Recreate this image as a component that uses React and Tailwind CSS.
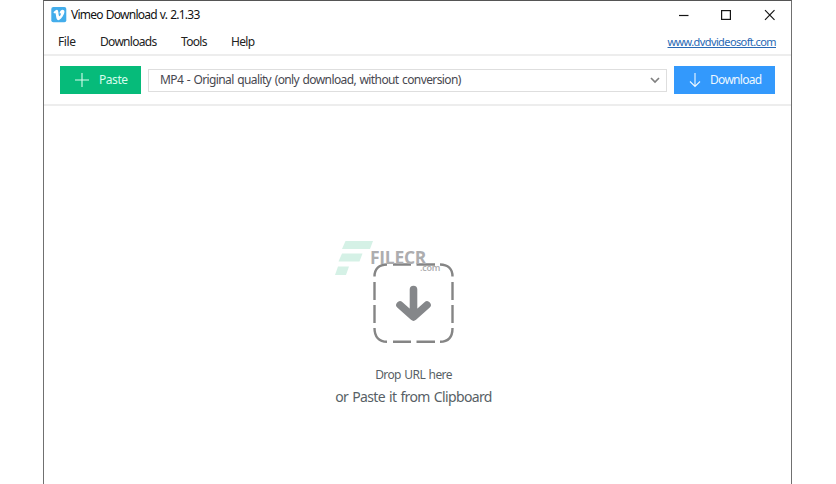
import React from "react";

function VimeoIcon() {
  return (
    <svg className="h-4 w-4 shrink-0" viewBox="0 0 16 16">
      <rect x="0.3" y="0.1" width="15" height="15.2" rx="2" fill="#43adeb" />
      <path
        d="M2.5 5.2 C3.8 4 5 2.8 5.9 2.8 C7.9 2.8 7.2 8.6 8.3 9.3 C9 9.3 10.2 7.2 9.8 6.4 C9.5 5.9 8.7 6.3 8.4 6.4 C9 3.6 10.7 2.7 12.1 2.9 C15 3.4 12.6 8 11 10.2 C9.6 12.1 8 13.5 6.8 13.1 C4.9 12.4 5.2 6.8 4.2 6.1 C3.9 5.9 3.5 6.2 3.1 6.4 Z"
        fill="#fff"
      />
    </svg>
  );
}

function TitleBar() {
  return (
    <div className="flex h-[27px] items-center pl-[7px] pr-[15px] text-[#111111]">
      <VimeoIcon />
      <span className="ml-1 whitespace-nowrap text-[12px] leading-4 tracking-[-0.75px] [word-spacing:0.6px]">Vimeo Download v. 2.1.33</span>
      <svg className="ml-auto h-[14px] w-[98px]" viewBox="0 0 98 14" fill="none" stroke="#151515">
        <path d="M1 7.5H10.5" strokeWidth="1.2" />
        <rect x="43.6" y="2.6" width="8.8" height="8.8" strokeWidth="1.2" />
        <path d="M87 2.2 L96.5 11.8 M96.5 2.2 L87 11.8" strokeWidth="1.2" />
      </svg>
    </div>
  );
}

function MenuBar() {
  return (
    <div className="flex h-7 items-center border-b-2 border-[#ededed] pl-[14px] pr-[15px] pt-[2px] text-[12px] tracking-[-0.7px] text-[#222222]">
      <span className="w-[42px] tracking-[-0.4px]">File</span>
      <span className="w-[81px]">Downloads</span>
      <span className="w-[50px]">Tools</span>
      <span>Help</span>
      <span className="ml-auto text-[11px] tracking-[-0.6px] text-[#2868b4] underline">www.dvdvideosoft.com</span>
    </div>
  );
}

function Toolbar() {
  return (
    <div className="flex h-[50px] items-center border-b-2 border-[#ededed] pl-4 pr-4 text-[12px]">
      <button className="flex h-7 w-[81px] items-center bg-[#06bb7a] pl-[14px] text-[#d8fbed]">
        <svg className="h-4 w-4" viewBox="0 0 16 16" fill="none" stroke="currentColor">
          <path d="M1 8H15M8 1V15" strokeWidth="1.1" />
        </svg>
        <span className="ml-[9px] tracking-[-0.45px]">Paste</span>
      </button>
      <div className="ml-[7px] flex h-[23px] w-[519px] items-center border border-[#dedede] pl-[11px] pr-[5px] text-[#484850]">
        <span className="whitespace-nowrap tracking-[-0.61px] [word-spacing:1px]">MP4 - Original quality (only download, without conversion)</span>
        <svg className="ml-auto h-3 w-3" viewBox="0 0 12 12" fill="none" stroke="#808080">
          <path d="M2 4 L6 8 L10 4" strokeWidth="1.7" />
        </svg>
      </div>
      <button className="ml-[7px] flex h-7 w-[101px] items-center bg-[#3399fc] pl-[14px] text-[#edf7ff]">
        <svg className="h-4 w-[14px]" viewBox="0 0 14 16" fill="none" stroke="currentColor">
          <path d="M7 1V14.5M2 9.5L7 14.5L12 9.5" strokeWidth="1.1" />
        </svg>
        <span className="ml-2 tracking-[-0.7px]">Download</span>
      </button>
    </div>
  );
}

function Watermark() {
  return (
    <div className="absolute left-[-38px] top-[-22px] h-[36px] w-[110px]">
      <svg className="absolute left-0 top-0 h-[36px] w-[40px]" viewBox="0 0 40 36" fill="#d5f1e6">
        <path d="M10.5 0H38L35 8H7ZM7 12.5H27.5L24.5 20.5H3.5ZM3 25.5H14L11 34H0Z" />
      </svg>
      <span className="absolute left-[35px] top-[6px] font-['Open_Sans',sans-serif] text-[17.5px] font-bold leading-5 tracking-[-0.3px] text-[#adadaf]">FILECR</span>
      <span className="absolute left-[85px] top-[22px] font-['Open_Sans',sans-serif] text-[9px] font-semibold leading-[10px] tracking-[-0.2px] text-[#aaaaac]">.com</span>
    </div>
  );
}

function DropZone() {
  return (
    <div className="flex flex-col items-center pr-[8px] pt-[157px] text-[#585f66]">
      <div className="relative h-[81px] w-[81px]">
        <svg className="h-[81px] w-[81px]" viewBox="0 0 81 81" fill="none" stroke="#858585" strokeWidth="2.4">
          <path d="M1.5 13.5C1.5 6 6 1.5 14 1.5M67 1.5C75 1.5 79.5 6 79.5 13.5M79.5 65C79.5 74 75 78.8 67 78.8M14 78.8C6 78.8 1.5 74 1.5 65" />
          <path d="M20 1.5H38M43.5 1.5H62M20 78.8H38M43.5 78.8H62M1.5 19V37M1.5 42V60M79.5 19V37M79.5 42V60" />
          <path d="M40.5 26.5V53M27 42L40.5 54L54 42" stroke="#85878a" strokeWidth="7.6" strokeLinecap="round" strokeLinejoin="round" />
        </svg>
        <Watermark />
      </div>
      <span className="mt-[23px] text-[12px] leading-4 tracking-[-0.6px] [word-spacing:1px]">Drop URL here</span>
      <span className="mt-[4px] text-[14px] leading-5 tracking-[-0.63px] [word-spacing:1px]">or Paste it from Clipboard</span>
    </div>
  );
}

export default function App() {
  return (
    <div className="h-[484px] w-[836px] overflow-hidden bg-white pl-[43px] font-['Noto_Sans',sans-serif]">
      <main className="h-[484px] w-[749px] border-x border-t border-x-[#707070] border-t-[#555555] bg-white">
        <TitleBar />
        <MenuBar />
        <Toolbar />
        <DropZone />
      </main>
    </div>
  );
}
